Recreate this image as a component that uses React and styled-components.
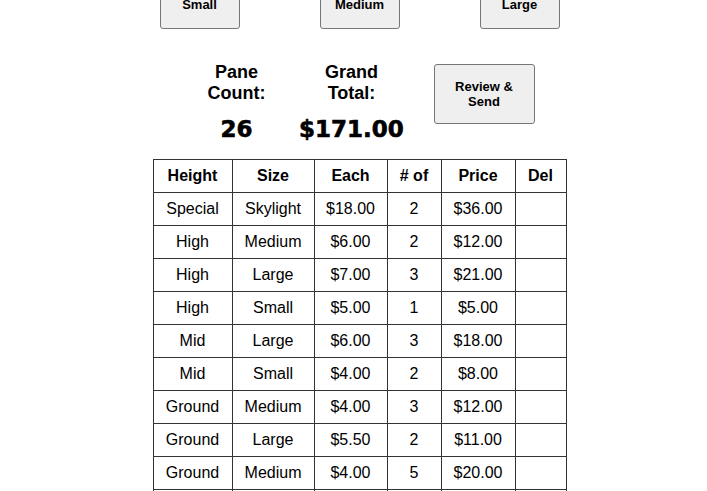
import React from "react";
import styled, { createGlobalStyle } from "styled-components";

const Global = createGlobalStyle`
  html, body { margin: 0; padding: 0; background: #fff; }
  body { font-family: "Liberation Sans", Arial, sans-serif; color: #000; overflow: hidden; }
`;

const Page = styled.div`
  width: 707px;
  box-sizing: border-box;
  padding-left: 12px;
  display: flex;
  flex-direction: column;
  align-items: center;
`;

const SizeRow = styled.div`
  display: flex;
  gap: 80px;
  margin-top: -21px;
`;

const Button = styled.button`
  width: ${(p) => p.$w || 80}px;
  height: ${(p) => p.$h || 50}px;
  box-sizing: border-box;
  background: #efefef;
  border: 1px solid #767676;
  border-radius: 3px;
  font-family: "Liberation Sans", Arial, sans-serif;
  font-weight: bold;
  font-size: 13px;
  line-height: 15px;
  color: #000;
  padding: 0 8px;
  margin-top: ${(p) => p.$mt || 0}px;
`;

const SummaryRow = styled.div`
  display: flex;
  align-items: flex-start;
  margin-top: 33px;
  margin-left: 2px;
`;

const Stat = styled.div`
  width: ${(p) => p.$w}px;
  margin-right: ${(p) => p.$gap}px;
  display: flex;
  flex-direction: column;
  align-items: center;
  text-align: center;
`;

const Label = styled.div`
  font-weight: bold;
  font-size: 18px;
  line-height: 21px;
`;

const Value = styled.div`
  font-family: "DejaVu Sans", sans-serif;
  font-weight: bold;
  font-size: 23px;
  line-height: 27px;
  margin-top: 12px;
  -webkit-text-stroke: 0.6px #000;
`;

const Table = styled.table`
  border-collapse: collapse;
  margin-top: 16px;
  table-layout: fixed;
  width: 413px;
`;

const Col = styled.col`
  width: ${(p) => p.$w}px;
`;

const Th = styled.th`
  border: 1px solid #333;
  height: 32px;
  padding: 0;
  font-size: 16px;
  font-weight: bold;
  text-align: center;
`;

const Td = styled.td`
  border: 1px solid #333;
  height: 32px;
  padding: 0;
  font-size: 16px;
  text-align: center;
`;

const rows = [
  ["Special", "Skylight", "$18.00", "2", "$36.00"],
  ["High", "Medium", "$6.00", "2", "$12.00"],
  ["High", "Large", "$7.00", "3", "$21.00"],
  ["High", "Small", "$5.00", "1", "$5.00"],
  ["Mid", "Large", "$6.00", "3", "$18.00"],
  ["Mid", "Small", "$4.00", "2", "$8.00"],
  ["Ground", "Medium", "$4.00", "3", "$12.00"],
  ["Ground", "Large", "$5.50", "2", "$11.00"],
  ["Ground", "Medium", "$4.00", "5", "$20.00"],
  ["Ground", "Small", "$3.00", "3", "$9.00"],
];

const widths = [79, 82, 73, 54, 74, 51];
const headers = ["Height", "Size", "Each", "# of", "Price", "Del"];

export default function App() {
  return (
    <>
      <Global />
      <Page>
        <SizeRow>
          <Button>Small</Button>
          <Button>Medium</Button>
          <Button>Large</Button>
        </SizeRow>
        <SummaryRow>
          <Stat $w={100} $gap={10}>
            <Label>Pane<br />Count:</Label>
            <Value>26</Value>
          </Stat>
          <Stat $w={110} $gap={27}>
            <Label>Grand<br />Total:</Label>
            <Value>$171.00</Value>
          </Stat>
          <Button $w={101} $h={60} $mt={2}>Review &amp; Send</Button>
        </SummaryRow>
        <Table>
          <colgroup>
            {widths.map((w, i) => <Col key={i} $w={w} />)}
          </colgroup>
          <thead>
            <tr>{headers.map((h) => <Th key={h}>{h}</Th>)}</tr>
          </thead>
          <tbody>
            {rows.map((r, i) => (
              <tr key={i}>
                {r.map((c, j) => <Td key={j}>{c}</Td>)}
                <Td />
              </tr>
            ))}
          </tbody>
        </Table>
      </Page>
    </>
  );
}
